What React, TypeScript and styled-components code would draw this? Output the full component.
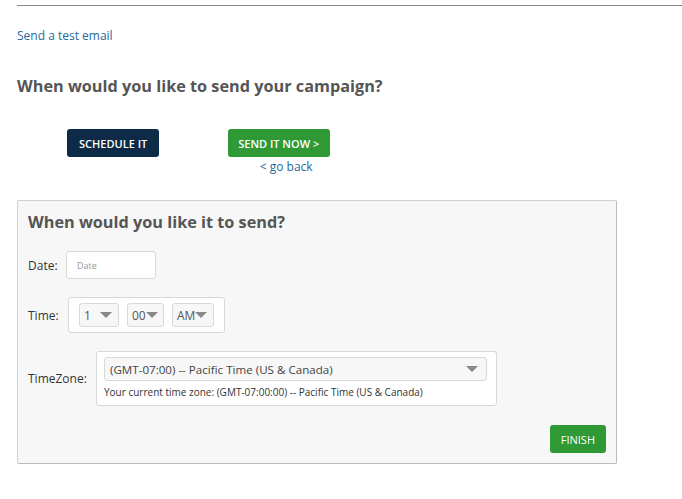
import styled, { createGlobalStyle } from 'styled-components';

const GlobalStyle = createGlobalStyle`
  body {
    margin: 0;
    background: #fff;
    font-family: 'Open Sans', 'Liberation Sans', sans-serif;
    color: #444;
  }
`;

const Page = styled.div`
  padding: 5px 0 0 17px;
`;

const Rule = styled.div`
  height: 1px;
  background: #888;
`;

const TestLink = styled.a`
  display: inline-block;
  margin-top: 21px;
  font-size: 12px;
  color: #1f6a9b;
  text-decoration: none;
`;

const Heading = styled.h2`
  margin: 30px 0 0;
  font-size: 16.25px;
  font-weight: 700;
  color: #555;
`;

const ChoiceRow = styled.div`
  display: flex;
  align-items: flex-start;
  gap: 69px;
  margin: 32px 0 0 50px;
`;

const Choice = styled.div`
  display: flex;
  flex-direction: column;
  align-items: center;
`;

const Button = styled.button<{ $dark?: boolean }>`
  height: 28px;
  padding: 0 12px;
  border: none;
  border-radius: 3px;
  background: ${(p) => (p.$dark ? '#0d2a47' : '#2f9a35')};
  color: #fff;
  font-family: inherit;
  font-size: 11px;
  font-weight: 600;
  cursor: pointer;
`;

const SendButton = styled(Button)`
  padding: 0 11px 0 10px;
`;

const BackLink = styled.a`
  margin: 1px 0 0 14px;
  font-size: 12px;
  color: #1f6a9b;
  text-decoration: none;
`;

const Panel = styled.div`
  width: 600px;
  margin-top: 25px;
  padding: 10px;
  box-sizing: border-box;
  background: #f7f7f7;
  border: 1px solid #d0d0d0;
  border-right-color: #bbb;
  border-bottom-color: #bbb;
  border-radius: 2px;
`;

const PanelTitle = styled.h3`
  margin: 0;
  font-size: 16.25px;
  font-weight: 700;
  color: #555;
`;

const FieldRow = styled.div<{ $top: number }>`
  display: flex;
  align-items: center;
  margin-top: ${(p) => p.$top}px;
`;

const Label = styled.span<{ $w: number }>`
  width: ${(p) => p.$w}px;
  font-size: 12px;
  color: #333;
`;

const DateInput = styled.input`
  width: 90px;
  height: 28px;
  box-sizing: border-box;
  padding: 0 10px;
  border: 1px solid #d8d8d8;
  border-radius: 3px;
  background: #fff;
  font-family: inherit;
  font-size: 9px;
  &::placeholder {
    color: #999;
  }
`;

const Box = styled.div`
  display: flex;
  gap: 8px;
  padding: 5px 10px;
  background: #fff;
  border: 1px solid #d8d8d8;
  border-radius: 3px;
`;

const Select = styled.div<{ $w: number }>`
  display: flex;
  align-items: center;
  justify-content: space-between;
  width: ${(p) => p.$w}px;
  height: 24px;
  box-sizing: border-box;
  padding: 0 4px;
  border: 1px solid #d8d8d8;
  border-radius: 3px;
  background: #f7f7f7;
  font-size: 12px;
  color: #555;
`;

const Caret = styled.span`
  width: 0;
  height: 0;
  border-left: 6px solid transparent;
  border-right: 6px solid transparent;
  border-top: 6px solid #888;
  margin-right: 2px;
`;

const ZoneBox = styled.div`
  width: 401px;
  box-sizing: border-box;
  padding: 5px 9px 6px 7px;
  background: #fff;
  border: 1px solid #d8d8d8;
  border-radius: 3px;
`;

const ZoneSelect = styled(Select)`
  width: 100%;
  padding: 0 6px 0 5px;
  font-size: 11.6px;
  color: #444;
`;

const ZoneNote = styled.div`
  margin-top: 4px;
  font-size: 10px;
  color: #333;
`;

const Footer = styled.div`
  display: flex;
  justify-content: flex-end;
  margin-top: 19px;
`;

const FinishButton = styled(Button)`
  font-weight: 400;
  padding: 0 11px;
`;

export default function App() {
  return (
    <>
      <GlobalStyle />
      <Page>
        <Rule />
        <TestLink href="#">Send a test email</TestLink>
        <Heading>When would you like to send your campaign?</Heading>
        <ChoiceRow>
          <Choice>
            <Button $dark>SCHEDULE IT</Button>
          </Choice>
          <Choice>
            <SendButton>SEND IT NOW &gt;</SendButton>
            <BackLink href="#">&lt; go back</BackLink>
          </Choice>
        </ChoiceRow>
        <Panel>
          <PanelTitle>When would you like it to send?</PanelTitle>
          <FieldRow $top={18}>
            <Label $w={38}>Date:</Label>
            <DateInput placeholder="Date" />
          </FieldRow>
          <FieldRow $top={18}>
            <Label $w={40}>Time:</Label>
            <Box>
              <Select $w={40}>
                1<Caret />
              </Select>
              <Select $w={37}>
                00<Caret />
              </Select>
              <Select $w={42}>
                AM<Caret />
              </Select>
            </Box>
          </FieldRow>
          <FieldRow $top={18}>
            <Label $w={68}>TimeZone:</Label>
            <ZoneBox>
              <ZoneSelect $w={383}>
                (GMT-07:00) -- Pacific Time (US &amp; Canada)
                <Caret />
              </ZoneSelect>
              <ZoneNote>Your current time zone: (GMT-07:00:00) -- Pacific Time (US &amp; Canada)</ZoneNote>
            </ZoneBox>
          </FieldRow>
          <Footer>
            <FinishButton>FINISH</FinishButton>
          </Footer>
        </Panel>
      </Page>
    </>
  );
}
